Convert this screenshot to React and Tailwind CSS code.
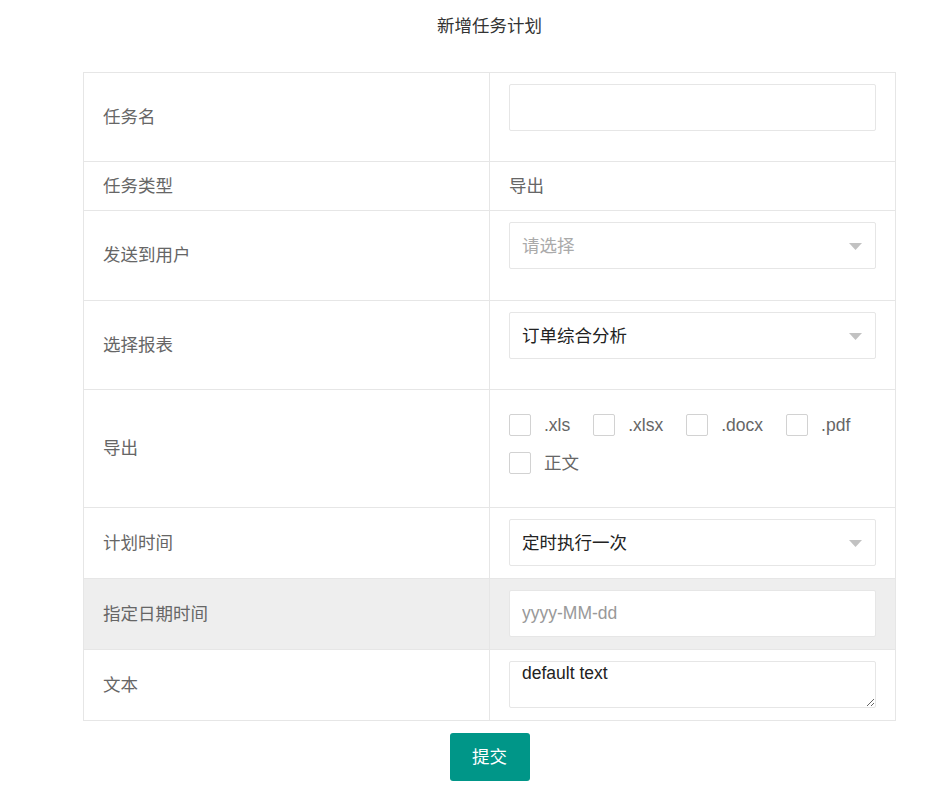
import { useState } from 'react'

const font = "font-['Liberation_Sans','Noto_Sans_CJK_SC',sans-serif]"

function Arrow() {
  return (
    <svg width="13" height="7" viewBox="0 0 13 7" className="absolute right-[13px] top-[20px]">
      <path d="M0 0 H13 L6.5 7 Z" fill="#c2c2c2" />
    </svg>
  )
}

function Row({ label, h, gray, children, top = true }) {
  return (
    <div className={`grid grid-cols-[405px_1fr] ${top ? 'border-t border-[#e6e6e6]' : ''} ${gray ? 'bg-[#eeeeee]' : ''} ${h}`}>
      <div className="flex items-center pl-[19px] text-[#666]">{label}</div>
      <div className="border-l border-[#e6e6e6] pl-[19px] pr-[19px]">{children}</div>
    </div>
  )
}

function Box({ text }) {
  return (
    <label className="flex h-[22px] items-center leading-[22px]">
      <span className="h-[22px] w-[22px] rounded-[2px] border border-[#d2d2d2] bg-white" />
      <span className="ml-[13px] text-[#666]">{text}</span>
    </label>
  )
}

export default function App() {
  const [name, setName] = useState('')
  const [text, setText] = useState('default text')

  return (
    <div className={`min-h-screen bg-white text-[17.5px] ${font}`}>
      <div className="ml-[83px] w-[813px]">
        <div className="flex h-[52px] items-center justify-center text-[#333]">新增任务计划</div>

        <div className="mt-[20px] border border-[#e6e6e6]">
          <Row label="任务名" h="h-[88px]" top={false}>
            <div className="pt-[11px]">
              <input
                value={name}
                onChange={(e) => setName(e.target.value)}
                className="h-[47px] w-full rounded-[2px] border border-[#e6e6e6] px-[12px] outline-none"
              />
            </div>
          </Row>
          <Row label="任务类型" h="h-[49px]">
            <div className="flex h-full items-center text-[#666]">导出</div>
          </Row>
          <Row label="发送到用户" h="h-[90px]">
            <div className="pt-[11px]">
              <div className="relative flex h-[47px] items-center rounded-[2px] border border-[#e6e6e6] px-[12px] pt-[2px] text-[#aaa]">
                请选择
                <Arrow />
              </div>
            </div>
          </Row>
          <Row label="选择报表" h="h-[89px]">
            <div className="pt-[11px]">
              <div className="relative flex h-[47px] items-center rounded-[2px] border border-[#e6e6e6] px-[12px] pt-[2px] text-[#222]">
                订单综合分析
                <Arrow />
              </div>
            </div>
          </Row>
          <Row label="导出" h="h-[118px]">
            <div className="flex flex-wrap gap-x-[23px] gap-y-[16px] pt-[24px]">
              <Box text=".xls" />
              <Box text=".xlsx" />
              <Box text=".docx" />
              <Box text=".pdf" />
              <Box text="正文" />
            </div>
          </Row>
          <Row label="计划时间" h="h-[71px]">
            <div className="pt-[11px]">
              <div className="relative flex h-[47px] items-center rounded-[2px] border border-[#e6e6e6] px-[12px] pt-[2px] text-[#222]">
                定时执行一次
                <Arrow />
              </div>
            </div>
          </Row>
          <Row label="指定日期时间" h="h-[71px]" gray>
            <div className="pt-[11px]">
              <input
                placeholder="yyyy-MM-dd"
                className="h-[47px] w-full rounded-[2px] border border-[#e6e6e6] bg-white px-[12px] outline-none placeholder:text-[#999]"
              />
            </div>
          </Row>
          <Row label="文本" h="h-[71px]">
            <div className="pt-[11px]">
              <textarea
                value={text}
                onChange={(e) => setText(e.target.value)}
                className="block h-[47px] w-full resize-y rounded-[2px] border border-[#e6e6e6] px-[12px] pt-[1px] leading-[20px] text-[#222] outline-none"
              />
            </div>
          </Row>
        </div>

        <div className="mt-[12px] flex justify-center">
          <button className="h-[48px] w-[80px] rounded-[3px] bg-[#009688] text-white">提交</button>
        </div>
      </div>
    </div>
  )
}
